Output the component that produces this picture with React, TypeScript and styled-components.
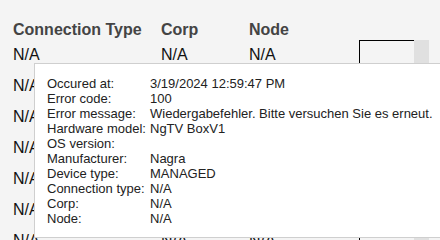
import React from "react";
import styled, { createGlobalStyle } from "styled-components";

const Global = createGlobalStyle`
  html, body { margin: 0; padding: 0; background: #f4f4f4; }
  body { font-family: "Liberation Sans", Arial, sans-serif; overflow: hidden; }
`;

const Page = styled.div`
  position: relative;
  width: 440px;
  height: 240px;
  overflow: hidden;
  background: #f4f4f4;
`;

const Table = styled.div`
  padding: 20px 0 0 13px;
`;

const Row = styled.div<{ $head?: boolean }>`
  display: grid;
  grid-template-columns: 148px 88px 110px auto;
  height: ${(p) => (p.$head ? "19px" : "31px")};
  line-height: ${(p) => (p.$head ? "19px" : "31px")};
  font-size: 16px;
  font-weight: ${(p) => (p.$head ? 700 : 400)};
  color: ${(p) => (p.$head ? "#444" : "#111")};
  white-space: nowrap;
`;

const Cell = styled.div``;

const Meter = styled.div`
  display: flex;
  margin-top: 1px;
  height: 28px;
`;

const MeterTrack = styled.div`
  width: 54px;
  border-top: 1px solid #000;
  border-left: 1px solid #000;
`;

const MeterThumb = styled.div`
  width: 15px;
  background: #e0e0e0;
`;

const Tooltip = styled.div`
  position: absolute;
  left: 34px;
  top: 63px;
  background: #fff;
  border: 1px solid #cfcfcf;
  padding: 12px 24px 11px 12px;
  display: grid;
  grid-template-columns: auto auto;
  column-gap: 4px;
  font-size: 13px;
  line-height: 15px;
  color: #222;
  white-space: nowrap;
`;

const Label = styled.div``;
const Value = styled.div``;

const rows = Array.from({ length: 7 });

const details: [string, string][] = [
  ["Occured at:", "3/19/2024 12:59:47 PM"],
  ["Error code:", "100"],
  ["Error message:", "Wiedergabefehler. Bitte versuchen Sie es erneut."],
  ["Hardware model:", "NgTV BoxV1"],
  ["OS version:", ""],
  ["Manufacturer:", "Nagra"],
  ["Device type:", "MANAGED"],
  ["Connection type:", "N/A"],
  ["Corp:", "N/A"],
  ["Node:", "N/A"],
];

export default function App() {
  return (
    <Page>
      <Global />
      <Table>
        <Row $head>
          <Cell>Connection Type</Cell>
          <Cell>Corp</Cell>
          <Cell>Node</Cell>
          <Cell />
        </Row>
        {rows.map((_, i) => (
          <Row key={i}>
            <Cell>N/A</Cell>
            <Cell>N/A</Cell>
            <Cell>N/A</Cell>
            <Meter>
              <MeterTrack />
              <MeterThumb />
            </Meter>
          </Row>
        ))}
      </Table>
      <Tooltip>
        {details.map(([k, v]) => (
          <React.Fragment key={k}>
            <Label>{k}</Label>
            <Value>{v || "\u00a0"}</Value>
          </React.Fragment>
        ))}
      </Tooltip>
    </Page>
  );
}
